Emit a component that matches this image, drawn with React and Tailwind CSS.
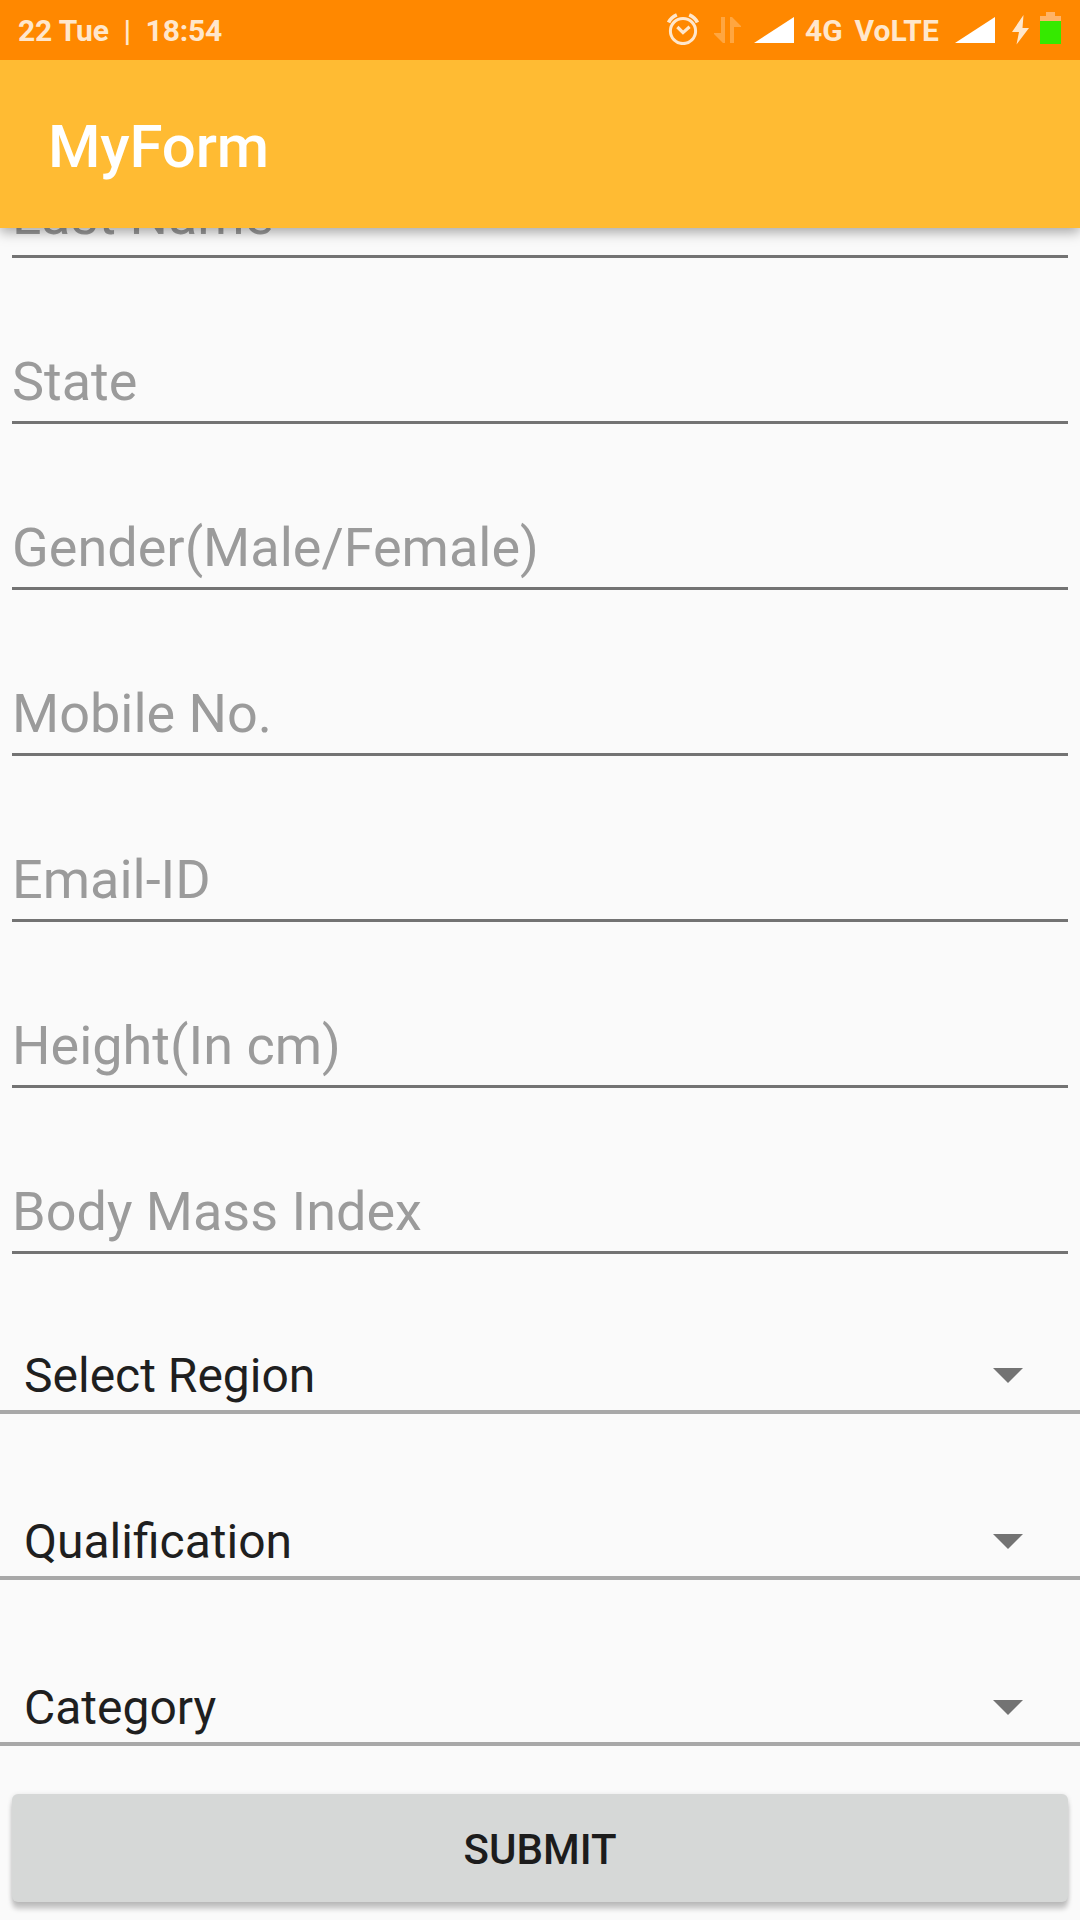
const fields = [
  'Last Name',
  'State',
  'Gender(Male/Female)',
  'Mobile No.',
  'Email-ID',
  'Height(In cm)',
  'Body Mass Index',
];

const spinners = ['Select Region', 'Qualification', 'Category'];

function AlarmIcon() {
  return (
    <svg className="h-8 w-8" viewBox="0 0 32 32" fill="none" stroke="#ffe7cc" strokeWidth="3">
      <circle cx="16" cy="18" r="12.6" />
      <path d="M10.4 14 16 19.6l6.6-5.8" strokeWidth="3.2" />
      <path d="M1.6 9.4Q4 4.4 9.8 1.9M30.4 9.4Q28 4.4 22.2 1.9" strokeWidth="3.6" />
    </svg>
  );
}

function DataIcon() {
  return (
    <svg className="h-[27px] w-[27px]" viewBox="0 0 27 27" fill="#ffa640">
      <path d="M7 0h4v26H9L0 17v-1h7zM16 26h4V10h7V9L18 0h-2z" />
    </svg>
  );
}

function SignalIcon() {
  return (
    <svg className="h-[26px] w-[40px]" viewBox="0 0 40 26" fill="#fff">
      <path d="M40 0v26H0z" />
    </svg>
  );
}

function BoltIcon() {
  return (
    <svg className="h-[30px] w-[17px]" viewBox="0 0 17 30" fill="#ffe7cc">
      <path d="M11.5 0 0 17h7L4.5 29.5 17 13h-6.5z" />
    </svg>
  );
}

function BatteryIcon() {
  return (
    <svg className="h-8 w-[21px]" viewBox="0 0 21 32">
      <path d="M6 0h9v4h6v5H0V4h6z" fill="#ffb366" />
      <path d="M0 9h21v23H0z" fill="#35e900" />
    </svg>
  );
}

function StatusBar() {
  return (
    <div className="flex h-[60px] items-start bg-[#ff8800] pl-[18px] text-[30px] leading-[36px] font-bold text-[#ffe7cc]">
      <span className="mt-[13px] tracking-[-0.13px] whitespace-pre">22 Tue  |  18:54</span>
      <div className="ml-auto flex items-start pr-[19px]">
        <div className="mt-[13px]"><AlarmIcon /></div>
        <div className="mt-[17px] ml-[15px]"><DataIcon /></div>
        <div className="mt-[17px] ml-[13px]"><SignalIcon /></div>
        <span className="mt-[13px] ml-[11px] w-[135px] [word-spacing:4.5px] whitespace-pre">4G VoLTE</span>
        <div className="mt-[17px] ml-[15px]"><SignalIcon /></div>
        <div className="mt-[15px] ml-[17px]"><BoltIcon /></div>
        <div className="mt-3 ml-[11px]"><BatteryIcon /></div>
      </div>
    </div>
  );
}

function Field({ label }) {
  return (
    <div className="flex h-[166px] flex-col justify-end px-3">
      <div className="h-[72px] border-b-[3px] border-[#737373] text-[54px] leading-[60px] text-[#9b9b9b]">
        {label}
      </div>
    </div>
  );
}

function Spinner({ label }) {
  return (
    <div className="flex h-[166px] flex-col justify-end">
      <div className="flex h-[68px] items-start justify-between border-b-4 border-[#a8a8a8] pr-[57px] pl-6">
        <span className="text-[48px] leading-[60px] text-[#1f1f1f]">{label}</span>
        <svg className="mt-[22px] h-[15px] w-[30px]" viewBox="0 0 30 15" fill="#737373">
          <path d="M0 0h30L15 15z" />
        </svg>
      </div>
    </div>
  );
}

export default function App() {
  return (
    <div className="flex h-[1920px] w-[1080px] flex-col overflow-hidden bg-[#fafafa] font-[Roboto,sans-serif]">
      <header className="relative z-10 shadow-[0_4px_12px_rgba(0,0,0,0.35)]">
        <StatusBar />
        <div className="flex h-[168px] items-center bg-[#ffbb33] pt-[5px] pl-12">
          <h1 className="text-[60px] leading-[70px] font-medium tracking-[-0.15px] text-white">MyForm</h1>
        </div>
      </header>
      <main className="min-h-0 flex-1 overflow-hidden">
        <div className="-mt-[136px] flex flex-col">
          {fields.map((label) => (
            <Field key={label} label={label} />
          ))}
          <div className="-mt-[6px]">
            {spinners.map((label) => (
              <Spinner key={label} label={label} />
            ))}
          </div>
          <button className="mx-3 mt-12 h-[108px] rounded-[6px] bg-[#d6d8d7] pt-[3px] text-[42px] leading-[50px] font-medium text-[#1c1c1c] shadow-[0_7px_5px_rgba(0,0,0,0.2),0_1px_5px_rgba(0,0,0,0.12)]">
            SUBMIT
          </button>
        </div>
      </main>
    </div>
  );
}
